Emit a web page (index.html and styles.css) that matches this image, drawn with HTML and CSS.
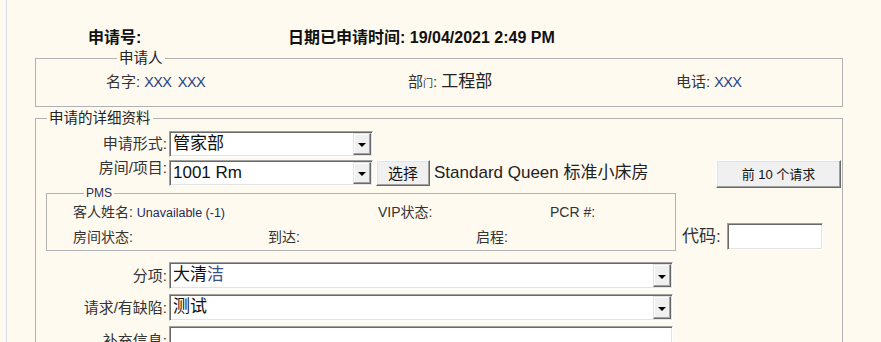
FILE: index.html
```html
<!DOCTYPE html>
<html lang="zh-CN">
<head>
	<meta charset="UTF-8">
	<title>申请</title>
	<link rel="stylesheet" href="styles.css">
</head>
<body>
	<div class="page">
		<div class="head">
			<span class="head-no">申请号:</span>
			<span class="head-date">日期已申请时间: 19/04/2021 2:49 PM</span>
		</div>

		<fieldset class="box box-who">
			<legend>申请人</legend>
			<div class="who-row">
				<div class="who-cell"><span class="lbl">名字:</span><span class="val">XXX XXX</span></div>
				<div class="who-cell"><span class="lbl">部<small>门</small>:</span><span class="val-big">工程部</span></div>
				<div class="who-cell"><span class="lbl">电话:</span><span class="val">XXX</span></div>
			</div>
		</fieldset>

		<fieldset class="box box-detail">
			<legend>申请的详细资料</legend>

			<div class="row row-first">
				<label class="row-lbl">申请形式:</label>
				<div class="combo combo-short">
					<span class="combo-text">管家部</span>
					<span class="combo-btn"></span>
				</div>
			</div>

			<div class="row row-room">
				<label class="row-lbl">房间/项目:</label>
				<div class="combo combo-short">
					<span class="combo-text">1001 Rm</span>
					<span class="combo-btn"></span>
				</div>
				<button class="btn btn-pick">选择</button>
				<span class="room-name">Standard Queen 标准小床房</span>
				<button class="btn btn-last">前 10 个请求</button>
			</div>

			<div class="pms-area">
				<fieldset class="pms">
					<legend>PMS</legend>
					<div class="pms-row">
						<span class="pms-a1">客人姓名: <span class="pms-val">Unavailable (-1)</span></span>
						<span class="pms-a2">VIP状态:</span>
						<span>PCR #:</span>
					</div>
					<div class="pms-row pms-row2">
						<span class="pms-b1">房间状态:</span>
						<span class="pms-b2">到达:</span>
						<span>启程:</span>
					</div>
				</fieldset>
				<div class="code">
					<label class="code-lbl">代码:</label>
					<span class="field code-input"></span>
				</div>
			</div>

			<div class="row row-gap">
				<label class="row-lbl">分项:</label>
				<div class="combo combo-long">
					<span class="combo-text">大清<span class="blue">洁</span></span>
					<span class="combo-btn"></span>
				</div>
			</div>

			<div class="row row-small">
				<label class="row-lbl">请求/有缺陷:</label>
				<div class="combo combo-long">
					<span class="combo-text">测试</span>
					<span class="combo-btn"></span>
				</div>
			</div>

			<div class="row row-small row-last">
				<label class="row-lbl">补充信息:</label>
				<span class="field field-long"></span>
			</div>
		</fieldset>
	</div>
</body>
</html>
```

FILE: styles.css
```css
html,body{margin:0;padding:0;background:#fffaf0;overflow:hidden;}
body{font:15px/16px "Liberation Sans","Noto Sans CJK SC",sans-serif;color:#222;}
.page{margin-left:6px;border-left:1px solid #dcdce6;padding-left:28px;height:342px;}

/* header */
.head{padding:29px 0 0 53px;height:18px;line-height:18px;font-size:16px;font-weight:bold;color:#111;display:flex;margin-bottom:3px;}
.head-no{width:200px;}

/* group boxes */
.box{margin:0;padding:0;width:808px;box-sizing:border-box;border:1px solid #b2b2b2;}
.box legend{margin-left:11px;padding:0 2px;font-size:14.5px;line-height:16px;color:#222;}

.box-who{padding:7px 0 15px 70px;}
.who-row{display:flex;height:18px;line-height:18px;}
.who-cell{display:flex;align-items:baseline;}
.who-cell:nth-child(1){width:302px;}
.who-cell:nth-child(2){width:268px;}
.lbl{font-size:15px;color:#333;margin-right:4px;}
.lbl small{font-size:10px;}
.val{font-size:14.5px;color:#233f86;letter-spacing:-0.6px;word-spacing:3px;}
.val-big{font-size:17px;color:#222;}

.box-detail{margin-top:3px;padding:5px 0 20px 0;}

/* form rows */
.row{display:flex;align-items:center;height:26px;}
.row-room{margin-top:3px;align-items:flex-start;}
.row-gap{margin-top:11px;height:27px;}
.row-small{margin-top:5px;height:27px;}
.row-last{align-items:flex-start;}
.row-lbl{width:131px;margin-right:2px;text-align:right;font-size:15px;color:#333;}
.row-last .row-lbl{margin-top:7px;}

.combo{display:flex;height:100%;box-sizing:border-box;background:#fff;border:1px solid;border-color:#a0a0a0 #fff #fff #a0a0a0;box-shadow:inset 1px 1px 0 #696969,inset -1px -1px 0 #e3e3e3;}
.combo-short{width:204px;height:26px;}
.combo-long{width:504px;}
.combo-text{flex:1;padding-left:3px;font-size:17px;line-height:24px;color:#111;}
.combo-text .blue{color:#3c4f86;}
.combo-btn{width:18px;margin:1px 1px 1px 0;box-sizing:border-box;background:#f0f0f0;border:1px solid;border-color:#e3e3e3 #696969 #696969 #e3e3e3;box-shadow:inset -1px -1px 0 #a0a0a0,inset 1px 1px 0 #fff;display:flex;align-items:center;justify-content:center;}
.combo-btn::after{content:"";border-left:4px solid transparent;border-right:4px solid transparent;border-top:4px solid #000;margin-top:2px;}

.field{display:block;height:100%;box-sizing:border-box;background:#fff;border:1px solid;border-color:#a0a0a0 #fff #fff #a0a0a0;box-shadow:inset 1px 1px 0 #696969,inset -1px -1px 0 #e3e3e3;}
.field-long{width:504px;height:40px;}

.btn{font:15px/1 "Liberation Sans","Noto Sans CJK SC",sans-serif;color:#111;background:#f0f0f0;box-sizing:border-box;border:1px solid;border-color:#fff #696969 #696969 #fff;box-shadow:inset -1px -1px 0 #a0a0a0,inset 1px 1px 0 #e3e3e3;padding:0;}
.btn-pick{width:54px;height:26px;margin-left:3px;}
.room-name{margin-left:4px;font-size:17px;line-height:26px;color:#222;}
.btn-last{width:125px;height:28px;margin-left:auto;margin-right:1px;font-size:13px;}

/* pms */
.pms-area{display:flex;align-items:flex-end;}
.pms{margin:0 0 0 10px;padding:4px 0 5px 26px;width:630px;box-sizing:border-box;border:1px solid #b2b2b2;}
.pms legend{margin-left:11px;padding:0 2px;font-size:12px;line-height:14px;color:#1f2a55;}
.pms-row{display:flex;height:16px;line-height:16px;font-size:14px;color:#333;}
.pms-row2{margin-top:9px;}
.pms-a1{width:305px;}
.pms-a2{width:172px;}
.pms-b1{width:195px;}
.pms-b2{width:208px;}
.pms-val{font-size:12.5px;color:#1f2a55;}

.code{display:flex;align-items:center;margin:0 0 1px 6px;}
.code-lbl{font-size:17px;color:#333;margin-right:6px;}
.code-input{width:96px;height:27px;}
```
